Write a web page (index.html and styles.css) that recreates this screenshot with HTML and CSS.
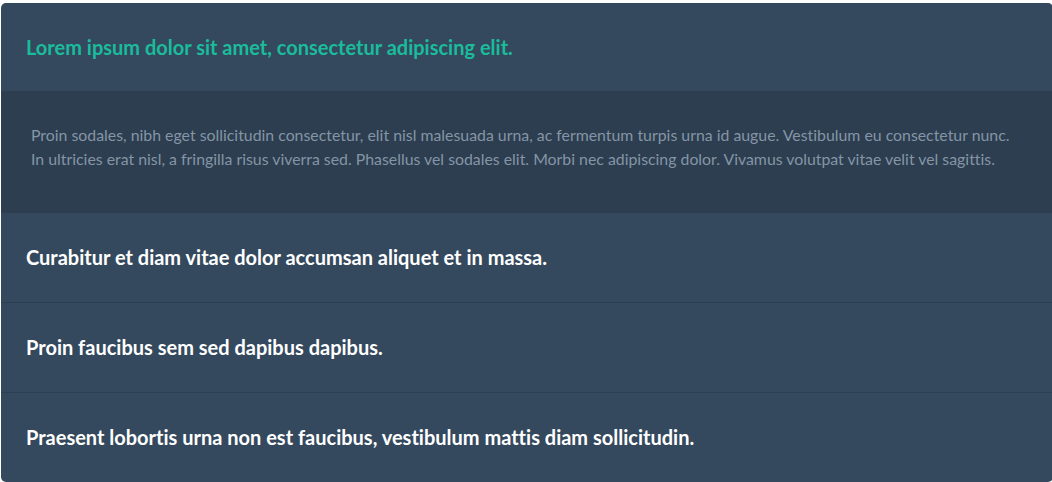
FILE: index.html
```html
<!DOCTYPE html>
<html>
<head>
<meta charset="utf-8">
<link rel="stylesheet" href="styles.css">
</head>
<body>
<div class="accordion">
  <div class="item open">
    <div class="header active">Lorem ipsum dolor sit amet, consectetur adipiscing elit.</div>
    <div class="content">
      <p>Proin sodales, nibh eget sollicitudin consectetur, elit nisl malesuada urna, ac fermentum turpis urna id augue. Vestibulum eu consectetur nunc. In ultricies erat nisl, a fringilla risus viverra sed. Phasellus vel sodales elit. Morbi nec adipiscing dolor. Vivamus volutpat vitae velit vel sagittis.</p>
    </div>
  </div>
  <div class="item">
    <div class="header">Curabitur et diam vitae dolor accumsan aliquet et in massa.</div>
  </div>
  <div class="item">
    <div class="header">Proin faucibus sem sed dapibus dapibus.</div>
  </div>
  <div class="item">
    <div class="header last">Praesent lobortis urna non est faucibus, vestibulum mattis diam sollicitudin.</div>
  </div>
</div>
</body>
</html>
```
FILE: styles.css
```css
html, body {
  margin: 0;
  padding: 0;
  background: #ffffff;
}
body {
  font-family: Lato, "Noto Sans", sans-serif;
  font-variant-ligatures: none;
}
.accordion {
  margin: 3px 0 0 1px;
  width: 1052px;
  background: #34495e;
  border-radius: 5px;
  overflow: hidden;
}
.header {
  box-sizing: border-box;
  height: 90px;
  padding: 0 25px 2px 25px;
  display: flex;
  align-items: center;
  color: #ffffff;
  font-weight: 700;
  font-size: 20px;
  border-bottom: 1px solid #2c3e50;
}
.header.active {
  color: #1abc9c;
  height: 89px;
  padding-bottom: 1px;
}
.header.last {
  border-bottom: none;
  height: 89px;
}
.content {
  background: #2c3e50;
  padding: 31px 30px 42px 30px;
}
.content p {
  margin: 0;
  font-size: 15.85px;
  line-height: 24px;
  color: #8595a5;
}
```
